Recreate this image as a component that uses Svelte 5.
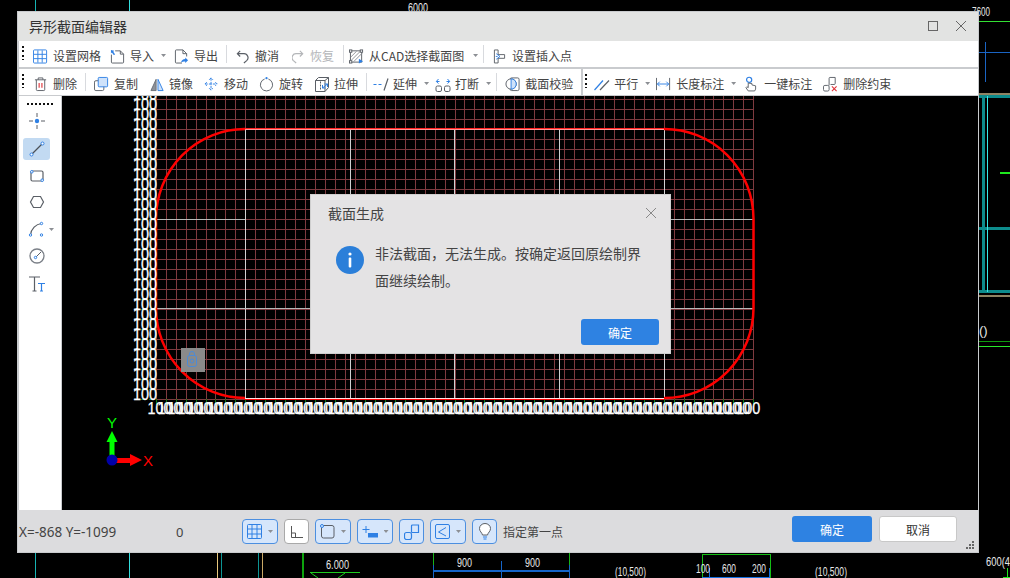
<script>
  const B = '#2f80e4', D = '#5a5f66', R = '#e0343a';
  const ic = {
    grid: `<rect x=".5" y="1.5" width="14" height="14" rx="1" fill="none" stroke="${B}"/><path d="M5.2 2v13M9.8 2v13M1 6.2h13M1 10.8h13" stroke="${B}" fill="none"/>`,
    imp: `<path d="M5.5 2.5h5.5l3.5 3.5v8.5a1 1 0 0 1-1 1h-11a1 1 0 0 1-1-1v-8M11 2.5v3.500h3.500" fill="none" stroke="${D}"/><path d="M1 1.500l3.500 1-1 1 2 3-1.500.5-2-2.800-1 1z" fill="${B}"/>`,
    exp: `<path d="M8.500 15.500h-6a1 1 0 0 1-1-1v-12a1 1 0 0 1 1-1h7l4 4v3M9.500 1.500v4h4" fill="none" stroke="${D}"/><path d="M7.500 15c.5-2.500 2-3.500 4.500-3.700v-1.800l3 3-3 3v-1.700c-2 0-3 .3-4.500 1.200z" fill="${B}"/>`,
    undo: `<path d="M4.500 2.500l-3 3 3 3M2 5.500h6.500a4.300 4.300 0 0 1 3 7.500l-3 2.500" fill="none" stroke="${D}" stroke-width="1.300"/>`,
    redo: `<path d="M8.500 2.500l3 3-3 3M11 5.500h-6.500a4.300 4.300 0 0 0-3 7.500l3 2.500" fill="none" stroke="#b4b6b9" stroke-width="1.300"/>`,
    cad: `<rect x="1.500" y="2.500" width="12" height="12" fill="none" stroke="${D}"/><path d="M2 9l6-6M2 13l10-10M5 14l9-9" stroke="#8b8f95" fill="none"/><rect x=".5" y="1.500" width="2.500" height="2.500" fill="#fff" stroke="${D}"/><rect x="12" y="1.500" width="2.500" height="2.500" fill="#fff" stroke="${D}"/><rect x=".5" y="13" width="2.500" height="2.500" fill="#fff" stroke="${D}"/><path d="M10.500 11l4.500 2.500-4.500 2.500z" fill="${B}"/>`,
    ins: `<path d="M1.500 1.500h4v5h7v4h-7v5h-4z" fill="none" stroke="${D}"/><path d="M3.500 5.500l4 3-4 3M5 8.500h-2" fill="none" stroke="${B}"/>`,
    del: `<path d="M1 3.500h12M4.500 3.500v-2h5v2M2.500 3.500v10.500a1 1 0 0 0 1 1h7a1 1 0 0 0 1-1V3.500" fill="none" stroke="${D}"/><path d="M5.500 7v5M8.500 7v5" stroke="${R}" stroke-width="1.200"/>`,
    copy: `<rect x=".5" y="4.500" width="10" height="10.500" rx="1.500" fill="#fff" stroke="${D}"/><rect x="4.500" y="1" width="10" height="10" rx="1" fill="#cfe2fa" stroke="${B}"/>`,
    mirror: `<path d="M6.500 3L1 15h5.500z" fill="#8d9199" stroke="#6b7078"/><path d="M8.500 3L14 15H8.500z" fill="#cfe2fa" stroke="${B}"/>`,
    move: `<path d="M7.500 1.500v13M1 8h13M5.500 3.500l2-2 2 2M5.500 12.500l2 2 2-2M3 6l-2 2 2 2M12 6l2 2-2 2" fill="none" stroke="${B}" stroke-dasharray="3 1.200"/>`,
    rotate: `<path d="M6 2.700a6.500 6.500 0 1 0 4 0" fill="none" stroke="${D}"/><circle cx="8" cy="1.800" r="1.200" fill="${B}"/>`,
    stretch: `<path d="M1.500 4.500h9.500v11h-9.500zM1.500 4.500l3-3h10v10l-3.500 4M11 4.500l3.500-3" fill="none" stroke="${D}"/><path d="M6.500 5.500v9" stroke="${D}" stroke-dasharray="2 1"/><path d="M8.500 12l5-4M13.500 11v-3h-3M8.500 9v3h3" fill="none" stroke="${B}"/>`,
    extend: `<path d="M.5 8.500h3M5.500 8.500h3" stroke="${B}" stroke-width="1.200" fill="none"/><path d="M11 14.500l4-12" stroke="${D}" fill="none" stroke-width="1.200"/>`,
    brk: `<rect x="1" y="10" width="5.500" height="5.500" rx="1.500" fill="none" stroke="${D}"/><rect x="9.500" y="10" width="5.500" height="5.500" rx="1.500" fill="none" stroke="${D}"/><path d="M1.500 5.500h3M3.500 3l-2.200 2.500 2.200 2M11.500 5.500h3M12.500 3l2.200 2.500-2.200 2" fill="none" stroke="${B}"/>`,
    check: `<rect x="5.500" y="1.500" width="9.500" height="13.500" rx="1.500" fill="none" stroke="${D}"/><circle cx="6.500" cy="8" r="5.500" fill="#fff" stroke="${D}"/><path d="M6.500 2.500a5.500 5.500 0 0 1 0 11z" fill="#cfe2fa" stroke="${B}"/>`,
    par: `<path d="M.5 14L9 4.500" stroke="${B}" fill="none" stroke-width="1.200"/><path d="M6 14L15 4.500" stroke="${D}" fill="none" stroke-width="1.200"/>`,
    dim: `<path d="M.5 1.500v13M14.500 1.500v13" stroke="${D}" fill="none"/><path d="M1.500 8h12M4 5.500L1.500 8 4 10.500M11 5.500L13.500 8 11 10.500" stroke="${B}" fill="none"/>`,
    one: `<circle cx="4.500" cy="3.500" r="2.800" fill="none" stroke="${B}" stroke-width="1.300"/><path d="M3.500 7v5l-1.500-1-1 1 2.500 3.500h7l1-2v-3.500l-4-1V7.500z" fill="#fff" stroke="${D}"/>`,
    dc: `<rect x=".5" y="9.500" width="6" height="6" rx="1.500" fill="none" stroke="${D}"/><path d="M6.500 9.500V2a1 1 0 0 1 1-1h5.500v6.500a1 1 0 0 1-1 1H8" fill="none" stroke="${D}"/><path d="M9.500 10.500l5 5M14.500 10.500l-5 5" stroke="${R}" stroke-width="1.200"/>`
  };
  const row1 = [
    { m: 9, w: 15, i: 'grid', g: 5, t: '设置网格' },
    { m: 9, w: 15, i: 'imp', g: 5, t: '导入', c: 1 },
    { m: 8, w: 15, i: 'exp', g: 5, t: '导出' },
    { sep: 1, m: 8 },
    { m: 9, w: 13, i: 'undo', g: 6, t: '撤消' },
    { m: 13, w: 13, i: 'redo', g: 5, t: '恢复', off: 1 },
    { sep: 1, m: 9 },
    { m: 5, w: 15, i: 'cad', g: 5, t: '从CAD选择截面图', c: 1, tw: 97 },
    { sep: 1, m: 5 },
    { m: 9, w: 13, i: 'ins', g: 6, t: '设置插入点' }
  ];
  const row2 = [
    { m: 10, w: 14, i: 'del', g: 5, t: '删除' },
    { sep: 1, m: 8 },
    { m: 8, w: 15, i: 'copy', g: 5, t: '复制' },
    { m: 12, w: 15, i: 'mirror', g: 4, t: '镜像' },
    { m: 11, w: 15, i: 'move', g: 5, t: '移动' },
    { m: 11, w: 15, i: 'rotate', g: 5, t: '旋转' },
    { m: 11, w: 16, i: 'stretch', g: 4, t: '拉伸' },
    { sep: 1, m: 8 },
    { m: 6, w: 16, i: 'extend', g: 4, t: '延伸', c: 1 },
    { m: 6, w: 16, i: 'brk', g: 4, t: '打断', c: 1 },
    { sep: 1, m: 5 },
    { m: 8, w: 15, i: 'check', g: 5, t: '截面校验' },
    { band: 1, m: 8 },
    { grip: 1, m: 2 },
    { m: 7, w: 16, i: 'par', g: 4, t: '平行', c: 1 },
    { m: 6, w: 15, i: 'dim', g: 5, t: '长度标注', c: 1 },
    { m: 9, w: 12, i: 'one', g: 7, t: '一键标注' },
    { m: 11, w: 15, i: 'dc', g: 5, t: '删除约束' }
  ];
  const N = 60;
  const vx = Array.from({ length: N + 1 }, (_, k) => Math.round(155.7 + k * 9.96) + 0.5);
  const hy = Array.from({ length: 31 }, (_, k) => 99.5 + k * 10);
  const bottomLabels = Array.from({ length: 60 }, (_, k) => 147.5 + k * 9.98);
  const leftLabels = Array.from({ length: 31 }, (_, k) => 399.5 - k * 10);
</script>

{#snippet items(list)}
  {#each list as it}
    {#if it.sep}
      <span class="sep" style="margin-left:{it.m}px"></span>
    {:else if it.band}
      <span class="band" style="margin-left:{it.m}px"></span>
    {:else if it.grip}
      <span class="grip" style="margin-left:{it.m}px"></span>
    {:else}
      <span class="tool" class:off={it.off} style="margin-left:{it.m}px;gap:{it.g}px">
        <svg width={it.w} height="16" viewBox="0 0 {it.w < 15 ? it.w + 1 : 16} 16">{@html ic[it.i]}</svg>
        <span style={it.tw ? `min-width:${it.tw}px` : ''}>{it.t}</span>
        {#if it.c}<i class="caret" style="margin-left:{7 - it.g}px"></i>{/if}
      </span>
    {/if}
  {/each}
{/snippet}

<div class="desk">
  <svg class="cad" width="1010" height="578" viewBox="0 0 1010 578">
    <g fill="none" stroke-width="1" shape-rendering="crispEdges">
      <path d="M35.500 0v12M35.500 552v26" stroke="#17b3b3"/>
      <path d="M129.500 0v12M129.500 552v26" stroke="#35dede"/>
      <path d="M217.500 552v26" stroke="#e8c77c"/>
      <path d="M221.500 552v26M258.500 552v26" stroke="#0d9494"/>
      <path d="M262.500 552v26" stroke="#c9a866"/>
      <path d="M302.500 552v26" stroke="#0da30d" stroke-width="2"/>
      <path d="M979 21.500h31" stroke="#33e033"/>
      <path d="M985.500 42v40M979 52.500h31" stroke="#1a64c4"/>
      <path d="M979 93.500h31M979 295.500h31" stroke="#8f8463" stroke-width="2"/>
      <path d="M979 96.500h31M979 228.500h31M979 291.500h31" stroke="#0d8c8c" stroke-width="3"/>
      <path d="M983.500 96v196" stroke="#0d8c8c" stroke-width="3"/>
      <path d="M987.500 96v196" stroke="#38e8e8"/>
      <path d="M1000 172.500h10" stroke="#1ee81e" stroke-width="2"/>
      <path d="M979 341.500h31" stroke="#0e9a0e"/>
      <path d="M979 346.500h31" stroke="#2ae82a"/>
      <path d="M1007.500 568v10M1003 577.500h7" stroke="#1ee81e"/>
      <path d="M433.500 552v13M569.500 552v13" stroke="#18b418"/>
      <path d="M433.500 565v13M501.500 561v17M569.500 565v13" stroke="#1564c8"/>
      <path d="M433 570.500h137" stroke="#1564c8" stroke-width="2"/>
      <path d="M310 572.500h50" stroke="#1ecc1e"/>
      <path d="M702.500 554v24M770.500 554v24M702 554.500h69" stroke="#14bd14"/>
      <path d="M702 577.500h68" stroke="#1470e0" stroke-width="2"/>
      <path d="M769.500 568v10M709.500 568v10" stroke="#1470e0"/>
    </g>
    <path d="M311 573l7 5M345 573l-7 5" fill="none" stroke="#1ecc1e"/>
    <g class="cadtext">
      <text x="408" y="12" textLength="20" lengthAdjust="spacingAndGlyphs">6000</text>
      <text x="972" y="16" textLength="18" lengthAdjust="spacingAndGlyphs" font-size="14">7600</text>
      <text x="979" y="335" font-size="11">()</text>
      <text x="326" y="569" textLength="23" lengthAdjust="spacingAndGlyphs">6.000</text>
      <text x="457" y="567" textLength="15" lengthAdjust="spacingAndGlyphs">900</text>
      <text x="525" y="567" textLength="15" lengthAdjust="spacingAndGlyphs">900</text>
      <text x="615" y="576" textLength="31" lengthAdjust="spacingAndGlyphs">(10,500)</text>
      <text x="815" y="576" textLength="32" lengthAdjust="spacingAndGlyphs">(10,500)</text>
      <text x="696" y="573" textLength="14" lengthAdjust="spacingAndGlyphs">100</text>
      <text x="722" y="573" textLength="14" lengthAdjust="spacingAndGlyphs">600</text>
      <text x="752" y="573" textLength="14" lengthAdjust="spacingAndGlyphs">200</text>
      <text x="986" y="566" textLength="24" lengthAdjust="spacingAndGlyphs">600(4</text>
    </g>
  </svg>

  <section class="win">
    <header class="title">
      <span class="tname">异形截面编辑器</span>
      <div class="wbtns">
        <svg width="12" height="12" viewBox="0 0 12 12"><rect x="1.500" y="1.500" width="9" height="9" fill="none" stroke="#666"/></svg>
        <svg width="12" height="12" viewBox="0 0 12 12"><path d="M1 1l10 10M11 1L1 11" fill="none" stroke="#666"/></svg>
      </div>
    </header>
    <div class="tb"><span class="grip first"></span>{@render items(row1)}</div>
    <div class="tb"><span class="grip first"></span>{@render items(row2)}</div>
    <div class="main">
      <aside class="side">
        <span class="dots"></span>
        <button class="sb one"><svg width="18" height="18" viewBox="0 0 18 18"><path d="M1 9h4M13 9h4M9 1v4M9 13v4" stroke="#5a5f66"/><circle cx="9" cy="9" r="2.200" fill="#2f80e4"/></svg></button>
        <button class="sb on"><svg width="18" height="18" viewBox="0 0 18 18"><path d="M4 14L14 4" stroke="#4b5058" stroke-width="1.200"/><circle cx="3.500" cy="14.500" r="1.500" fill="#fff" stroke="#2f80e4"/><circle cx="14.500" cy="3.500" r="1.500" fill="#fff" stroke="#2f80e4"/></svg></button>
        <button class="sb tight"><svg width="18" height="18" viewBox="0 0 18 18"><rect x="3" y="4" width="12" height="10" rx="1.500" fill="none" stroke="#5a5f66" stroke-width="1.200"/><circle cx="3.800" cy="4.800" r="1.300" fill="#fff" stroke="#2f80e4"/><circle cx="14.200" cy="13.200" r="1.300" fill="#fff" stroke="#2f80e4"/></svg></button>
        <button class="sb"><svg width="18" height="18" viewBox="0 0 18 18"><path d="M5.500 3.500h7L15.500 9l-3 5.500h-7L2.500 9z" fill="none" stroke="#5a5f66" stroke-width="1.200"/></svg></button>
        <button class="sb arc"><svg width="18" height="18" viewBox="0 0 18 18"><path d="M2.500 15C3 9 8 4 13.500 3.500" fill="none" stroke="#5a5f66" stroke-width="1.200"/><circle cx="2.500" cy="15" r="1.200" fill="#fff" stroke="#2f80e4"/><circle cx="13.500" cy="3.500" r="1.200" fill="#fff" stroke="#2f80e4"/><circle cx="13.500" cy="15" r="1.200" fill="#fff" stroke="#2f80e4"/></svg><i class="caret"></i></button>
        <button class="sb one"><svg width="18" height="18" viewBox="0 0 18 18"><circle cx="9" cy="9" r="7" fill="none" stroke="#7a7f87" stroke-width="1.300"/><path d="M8 10l5-5" stroke="#5a5f66"/><circle cx="7.500" cy="10.500" r="1.200" fill="#fff" stroke="#2f80e4"/></svg></button>
        <button class="sb"><svg width="18" height="18" viewBox="0 0 18 18"><path d="M1 2h11M6.500 2v14M4.500 16h4" fill="none" stroke="#5a5f66" stroke-width="1.200"/><path d="M10 8.500h7M13.500 8.500V16M12 16h3" fill="none" stroke="#2f80e4" stroke-width="1.200"/></svg></button>
      </aside>
      <div class="canvas">
        <svg width="916" height="414" viewBox="62 96 916 414">
          <g stroke="#7e3a3f" shape-rendering="crispEdges">
            {#each vx as x}<line x1={x} x2={x} y1="96" y2="399" />{/each}
            {#each hy as y}<line x1="156" x2="754" y1={y} y2={y} />{/each}
          </g>
          <g stroke="#0d7a0d" shape-rendering="crispEdges">
            {#each vx as x}<line x1={x} x2={x} y1="399" y2="405" />{/each}
            {#each hy as y}<path d="M141 {y}h2M149 {y}h2" />{/each}
          </g>
          <g stroke="#d0d0d0" fill="none" shape-rendering="crispEdges">
            <path d="M245.500 129v269M350.500 129v269M454.500 129v269M559.500 129v269M664.500 129v269" />
            <path d="M156 219.500h89M664 219.500h90M156 308.500h598" stroke="#b8b8b8" />
          </g>
          <path d="M245 129A89 90 0 0 0 156 219V308A89 90 0 0 0 245 398M664 129A89 90 0 0 1 753.500 219V308A89 90 0 0 1 664 398" fill="none" stroke="#f00" stroke-width="2.500" />
          <path d="M245 128.500h419" stroke="#f22" fill="none"/>
          <path d="M245 129.500h419" stroke="#ff9a9a" fill="none"/>
          <path d="M245 398.500h419" stroke="#ffe6e6" fill="none"/>
          <path d="M245 399.500h419" stroke="#f00" fill="none"/>
          <g class="nums">
            {#each leftLabels as y}<text x="133" y={y} textLength="24" lengthAdjust="spacingAndGlyphs">100</text>{/each}
            {#each bottomLabels as x}<text x={x} y="414" textLength="24" lengthAdjust="spacingAndGlyphs">100</text>{/each}
          </g>
          <rect x="181" y="348" width="24" height="24" fill="#8a8a8a" />
          <g fill="none" stroke="#4a8ad8"><rect x="187.500" y="355.500" width="9" height="11" rx="2"/><path d="M189.500 355.500v-1.500a2.500 2.500 0 0 1 5 0v1.500"/><circle cx="192" cy="361" r="2"/></g>
          <path d="M109.500 442h5v14h-5z" fill="#0f0"/>
          <path d="M112 431l5.500 11h-11z" fill="#0f0"/>
          <path d="M116 458h15v5h-15z" fill="#f00"/>
          <path d="M130 454l12 6-12 6z" fill="#f00"/>
          <circle cx="112" cy="460" r="5.500" fill="#0000a8"/>
          <text x="107" y="428" class="ax" fill="#0f0">Y</text>
          <text x="143" y="466" class="ax" fill="#f00">X</text>
        </svg>
      </div>
    </div>
    <footer class="foot">
      <span class="coord">X=-868 Y=-1099</span>
      <span class="zero">0</span>
      <div class="fb">
        <button class="fbtn on wide"><svg width="15" height="15" viewBox="0 0 15 15"><rect x=".5" y=".5" width="14" height="14" rx="1" fill="none" stroke="#2f80e4"/><path d="M5 1v13M10 1v13M1 5h13M1 10h13" stroke="#2f80e4"/></svg><i class="caret"></i></button>
        <button class="fbtn"><svg width="14" height="14" viewBox="0 0 14 14"><path d="M1.500 1v11.500H13M1.500 8h4v4.500" fill="none" stroke="#555"/></svg></button>
        <button class="fbtn on wide"><svg width="15" height="15" viewBox="0 0 15 15"><rect x="1.500" y="1.500" width="12.500" height="12.500" rx="2" fill="none" stroke="#5a5f66"/><circle cx="2" cy="2" r="1.500" fill="#d6e6fb" stroke="#2f80e4"/></svg><i class="caret"></i></button>
        <button class="fbtn on wide"><svg width="16" height="14" viewBox="0 0 16 14"><path d="M4 1v7M.5 4.500h7" stroke="#2f80e4" fill="none"/><rect x="6" y="8" width="10" height="4.500" fill="#2f80e4"/></svg><i class="caret"></i></button>
        <button class="fbtn on"><svg width="16" height="16" viewBox="0 0 16 16"><rect x=".5" y="8.500" width="7" height="7" rx="2" fill="none" stroke="#2f80e4" stroke-width="1.200"/><path d="M7.500 8.500V2a1 1 0 0 1 1-1h6v7.500h-7" fill="none" stroke="#2f80e4" stroke-width="1.200"/></svg></button>
        <button class="fbtn on wide"><svg width="15" height="15" viewBox="0 0 15 15"><rect x=".5" y=".5" width="14" height="14" rx="1.500" fill="none" stroke="#2f80e4"/><path d="M11 3.500L3.500 8l7.500 4" stroke="#2f80e4" fill="none"/></svg><i class="caret"></i></button>
        <button class="fbtn on"><svg width="14" height="17" viewBox="0 0 14 17"><path d="M4.500 12C4 9.500 1.500 8.500 1.500 5.500a5.500 5 0 0 1 11 0c0 3-2.500 4-3 6.500z" fill="#fff" stroke="#5a5f66"/><path d="M5 14h4M5.500 16h3" stroke="#2f80e4"/></svg></button>
        <span class="hint">指定第一点</span>
      </div>
      <button class="ok big">确定</button>
      <button class="cancel">取消</button>
      <svg class="rz" width="9" height="8" viewBox="0 0 9 8"><path d="M6 0h2v2H6zM3 3h2v2H3zM6 3h2v2H6zM0 6h2v2H0zM3 6h2v2H3zM6 6h2v2H6z" fill="#666"/></svg>
    </footer>
  </section>

  <div class="dlg">
    <div class="dh">
      <span>截面生成</span>
      <svg width="12" height="12" viewBox="0 0 12 12"><path d="M1 1l10 10M11 1L1 11" fill="none" stroke="#888"/></svg>
    </div>
    <div class="db">
      <svg width="28" height="28" viewBox="0 0 28 28"><circle cx="14" cy="14" r="14" fill="#2b7fd9"/><rect x="12.700" y="11.500" width="2.600" height="10" rx="1" fill="#fff"/><circle cx="14" cy="8" r="1.600" fill="#fff"/></svg>
      <p>非法截面，无法生成。按确定返回原绘制界面继续绘制。</p>
    </div>
    <div class="df"><button class="ok">确定</button></div>
  </div>
</div>

<style>
  :global(body) { margin: 0; background: #000; }
  .desk { position: relative; width: 1010px; height: 578px; overflow: hidden; background: #000; font-family: "Noto Sans CJK SC", "Liberation Sans", sans-serif; color: #444; font-size: 12px; }
  .cad { position: absolute; inset: 0; }
  .cadtext text { fill: #e8e8e8; font: 13px "Liberation Sans", sans-serif; }
  .win { position: absolute; left: 17px; top: 11px; width: 962px; height: 542px; background: #c9cbce; display: flex; flex-direction: column; box-sizing: border-box; padding: 1px; }
  .title { height: 29px; box-sizing: border-box; background: #e2e3e2; display: flex; align-items: center; justify-content: space-between; padding: 0 12px 2px 11px; flex: none; }
  .tname { font-size: 14px; color: #333; }
  .wbtns { display: flex; gap: 16px; align-items: center; margin-right: -1px; }
  .tb { height: 26px; background: #fff; margin: 0 0 2px 1px; display: flex; align-items: center; flex: none; white-space: nowrap; }
  .tb + .tb { margin-bottom: 1px; }
  .tool { display: inline-flex; align-items: center; line-height: 16px; padding-top: 3px; }
  .tool svg { flex: none; }
  .tool.off { color: #b4b6b9; }
  .caret { display: block; width: 5px; height: 3px; background: #8c8f94; clip-path: polygon(0 0, 100% 0, 50% 100%); flex: none; }
  .sep { width: 1px; height: 18px; background: #d8dade; flex: none; }
  .band { width: 2px; height: 26px; background: #c9cbce; flex: none; }
  .grip { width: 2px; height: 14px; flex: none; margin-bottom: 3px; background: repeating-linear-gradient(#111 0 2px, transparent 2px 4.400px); }
  .grip.first { margin-left: 3px; }
  .main { flex: 1; display: flex; min-height: 0; margin-left: 1px; }
  .side { width: 42px; background: #fff; display: flex; flex-direction: column; align-items: flex-start; flex: none; }
  .dots { width: 26px; height: 2px; margin: 7px 0 5px 8px; background: repeating-linear-gradient(90deg, #111 0 2px, transparent 2px 4px); }
  .sb { position: relative; width: 27px; height: 22px; padding: 0; border: 0; border-radius: 3px; background: transparent; display: flex; align-items: center; justify-content: center; margin: 0 0 5px 4px; }
  .sb.one { margin-bottom: 6px; }
  .sb.tight { margin-bottom: 4px; }
  .sb.on { background: #c2daf2; }
  .sb.arc .caret { position: absolute; right: -4px; top: 10px; }
  .canvas { flex: 1; background: #000; margin-left: 1px; min-width: 0; overflow: hidden; }
  .canvas svg { display: block; }
  .nums text { fill: #fff; stroke: #fff; stroke-width: .25px; font: 16px "Liberation Sans", sans-serif; }
  .ax { font: 15px "Liberation Sans", sans-serif; }
  .foot { height: 42px; flex: none; background: #dcdcde; display: flex; align-items: center; position: relative; padding-top: 1px; box-sizing: border-box; }
  .coord { font-family: "Noto Sans", sans-serif; font-size: 13.500px; margin-left: 1px; width: 157px; flex: none; white-space: nowrap; }
  .zero { font-family: "Noto Sans", sans-serif; font-size: 13px; width: 66px; flex: none; }
  .fb { display: flex; align-items: center; gap: 6px; flex: none; width: 550px; }
  .fbtn { height: 25px; width: 25px; box-sizing: border-box; padding: 0; border: 1px solid #a9a9a9; border-radius: 4px; background: #fff; display: flex; align-items: center; justify-content: center; }
  .fbtn.on { background: #d6e6fb; border-color: #4c8fe0; }
  .fbtn.wide { width: 36px; gap: 6px; }
  .hint { color: #444; white-space: nowrap; }
  .ok { background: #2e82e2; color: #fff; border: 0; border-radius: 3px; font: inherit; padding: 0; }
  .ok.big { width: 80px; height: 26px; flex: none; margin-top: -5px; }
  .cancel { width: 78px; height: 26px; flex: none; background: #fff; border: 1px solid #c8c8c8; border-radius: 3px; margin: -5px 0 0 7px; font: inherit; color: #333; padding: 0; box-sizing: border-box; }
  .rz { position: absolute; right: 3px; bottom: 3px; }
  .dlg { position: absolute; left: 310px; top: 194px; width: 361px; height: 160px; box-sizing: border-box; background: #e4e3e4; border: 1px solid #cfcfcf; display: flex; flex-direction: column; }
  .dh { height: 36px; display: flex; justify-content: space-between; align-items: center; padding: 0 13px 0 17px; font-size: 14px; color: #444; flex: none; }
  .db { display: flex; gap: 11px; padding: 9px 24px 0 25px; flex: 1; }
  .db svg { flex: none; margin-top: 6px; }
  .db p { margin: 0; font-size: 14px; line-height: 27px; color: #444; width: 270px; }
  .df { display: flex; justify-content: flex-end; padding: 0 11px 8px 0; flex: none; }
  .df .ok { width: 78px; height: 26px; }
</style>
